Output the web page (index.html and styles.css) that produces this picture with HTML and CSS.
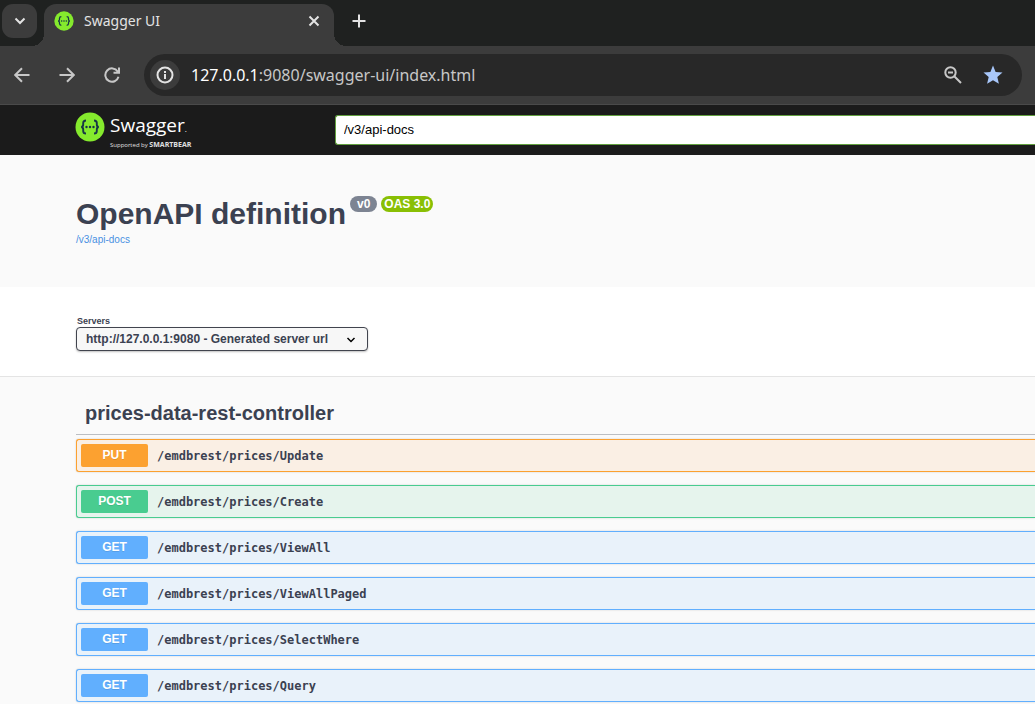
FILE: index.html
```html
<!DOCTYPE html>
<html lang="en">
<head>
<meta charset="utf-8">
<title>Swagger UI</title>
<link rel="stylesheet" href="styles.css">
</head>
<body>
<svg class="sprite" aria-hidden="true">
  <symbol id="swagger-mark" viewBox="0 0 30 30">
    <circle cx="15" cy="15" r="14.5" fill="#85ea2d"/>
    <path d="M11 8.500c-2.300 0-2.800.8-2.800 2.600v1.500c0 1.500-.7 2.300-2 2.400c1.300.1 2 .9 2 2.400v1.500c0 1.800.5 2.600 2.800 2.600M19 8.500c2.300 0 2.800.8 2.800 2.600v1.500c0 1.500.7 2.300 2 2.400c-1.300.1-2 .9-2 2.400v1.500c0 1.800-.5 2.600-2.800 2.600" fill="none" stroke="#173647" stroke-width="1.900"/>
    <g fill="#173647"><circle cx="11.500" cy="15" r="1.200"/><circle cx="15" cy="15" r="1.200"/><circle cx="18.500" cy="15" r="1.200"/></g>
  </symbol>
</svg>

<header class="browser">
  <div class="tab-strip">
    <button class="tab-search" aria-label="Search tabs"><svg width="12" height="12" viewBox="0 0 12 12"><path d="M1.500 3.500 6 8l4.500-4.500"/></svg></button>
    <div class="tab">
      <svg class="tab-icon" width="20" height="20"><use href="#swagger-mark"/></svg>
      <span class="tab-title">Swagger UI</span>
      <button class="icon-button" aria-label="Close tab"><svg width="12" height="12" viewBox="0 0 12 12"><path d="m1.500 1.500 9 9m0-9-9 9"/></svg></button>
    </div>
    <button class="icon-button new-tab" aria-label="New tab"><svg width="14" height="14" viewBox="0 0 14 14"><path d="M7 .5v13M.5 7h13"/></svg></button>
  </div>
  <nav class="toolbar">
    <button class="icon-button" aria-label="Back"><svg width="16" height="16" viewBox="0 0 16 16"><path d="M15.500 8H1.500M8 1.200 1.200 8 8 14.800"/></svg></button>
    <button class="icon-button" aria-label="Forward"><svg width="16" height="16" viewBox="0 0 16 16"><path d="M.5 8h14M8 1.200 14.800 8 8 14.800"/></svg></button>
    <button class="icon-button" aria-label="Reload"><svg width="16" height="16" viewBox="0 0 16 16"><path d="M13.700 4.500A6.700 6.700 0 1 0 14.500 9.800M15 .5v5.300H9.500"/></svg></button>
    <div class="omnibox">
      <button class="site-info" aria-label="View site information"><svg width="18" height="18" viewBox="0 0 18 18"><circle cx="9" cy="9" r="7.500"/><path d="M9 8v5M9 5v2"/></svg></button>
      <span class="address"><b>127.0.0.1</b>:9080/swagger-ui/index.html</span>
      <button class="icon-button" aria-label="Zoom"><svg width="18" height="18" viewBox="0 0 18 18"><circle cx="6.500" cy="6.500" r="5.200"/><path d="M4 6.500h5M10.500 10.500l6.500 6.500"/></svg></button>
      <button class="icon-button" aria-label="Edit bookmark"><svg class="star" width="20" height="20" viewBox="0 0 20 20"><path d="m10 .5 2.600 6.400 6.900.6-5.200 4.500 1.600 6.800L10 15.200l-5.900 3.600L5.700 12 .5 7.500l6.900-.6z"/></svg></button>
    </div>
  </nav>
</header>

<div class="topbar">
  <a class="brand" href="#">
    <svg width="30" height="30"><use href="#swagger-mark"/></svg>
    <span class="brand-text">
      <span class="brand-name">Swagger<small>.</small></span>
      <span class="brand-by">Supported by <b>SMARTBEAR</b></span>
    </span>
  </a>
  <input class="spec-url" type="text" value="/v3/api-docs" aria-label="Definition URL">
</div>

<main>
  <section class="info">
    <h1>OpenAPI definition</h1>
    <div class="badges"><span class="badge">v0</span><span class="badge badge-oas">OAS 3.0</span></div>
    <a class="spec-link" href="#">/v3/api-docs</a>
  </section>

  <section class="servers">
    <label for="servers">Servers</label>
    <div class="select-wrap">
      <select id="servers"><option>http://127.0.0.1:9080 - Generated server url</option></select>
      <svg width="10" height="8" viewBox="0 0 10 8"><path d="m1.500 2 3.500 3.500 3.500-3.500"/></svg>
    </div>
  </section>

  <section class="operations">
    <h2>prices-data-rest-controller</h2>
    <div class="operation-list">
      <button class="operation put"><span class="method">PUT</span><span class="path">/emdbrest/prices/Update</span></button>
      <button class="operation post"><span class="method">POST</span><span class="path">/emdbrest/prices/Create</span></button>
      <button class="operation get"><span class="method">GET</span><span class="path">/emdbrest/prices/ViewAll</span></button>
      <button class="operation get"><span class="method">GET</span><span class="path">/emdbrest/prices/ViewAllPaged</span></button>
      <button class="operation get"><span class="method">GET</span><span class="path">/emdbrest/prices/SelectWhere</span></button>
      <button class="operation get"><span class="method">GET</span><span class="path">/emdbrest/prices/Query</span></button>
    </div>
  </section>
</main>
</body>
</html>
```
FILE: styles.css
```css
* { box-sizing: border-box; }

body {
  margin: 0;
  background: #fafafa;
  color: #3b4151;
  font-family: "Liberation Sans", Arial, sans-serif;
}

button { border: 0; padding: 0; background: none; color: inherit; }
svg { display: block; flex: none; }
.sprite { position: absolute; width: 0; height: 0; }

/* Browser frame */
.browser {
  background: #3c3c3c;
  color: #e3e3e3;
  font-family: "Noto Sans", "Open Sans", sans-serif;
  border-bottom: 1px solid #4a4a4a;
}
.browser svg { fill: none; stroke: currentColor; stroke-width: 2; }
.browser .tab-icon { stroke: none; }

.tab-strip {
  display: flex;
  height: 46px;
  padding: 4px 0 0 2px;
  background: #1f2120;
}
.tab-search {
  display: grid;
  place-items: center;
  width: 35px;
  height: 34px;
  margin-right: 7px;
  border-radius: 11px;
  background: #3c3c3c;
}
.tab {
  position: relative;
  display: flex;
  align-items: center;
  gap: 10px;
  width: 290px;
  padding: 0 14px 8px 10px;
  border-radius: 12px 12px 0 0;
  background: #3c3c3c;
}
.tab::before,
.tab::after {
  content: "";
  position: absolute;
  bottom: 0;
  width: 12px;
  height: 12px;
}
.tab::before { right: 100%; background: radial-gradient(circle at 0 0, transparent 12px, #3c3c3c 12px); }
.tab::after { left: 100%; background: radial-gradient(circle at 100% 0, transparent 12px, #3c3c3c 12px); }
.tab-title { flex: 1; font-size: 14px; line-height: 20px; }
.icon-button { display: grid; place-items: center; }
.new-tab { height: 34px; margin-left: 18px; }

.toolbar {
  display: flex;
  align-items: center;
  gap: 29px;
  height: 58px;
  padding: 0 13px 0 14px;
  color: #c7c7c7;
}
.omnibox {
  display: flex;
  flex: 1;
  align-items: center;
  gap: 21px;
  height: 42px;
  margin-left: -5px;
  padding: 0 19px 0 6px;
  border-radius: 21px;
  background: #282828;
}
.site-info {
  display: grid;
  place-items: center;
  width: 30px;
  height: 30px;
  margin-right: -10px;
  border-radius: 50%;
  background: #3c3c3c;
  color: #e3e3e3;
}
.address { flex: 1; font-size: 16px; line-height: 24px; }
.address b { color: #fff; font-weight: 400; }
.browser .star { fill: #a8c7fa; stroke: none; }

/* Swagger header */
.topbar {
  display: flex;
  align-items: center;
  height: 50px;
  padding-left: 75px;
  background: #1b1b1b;
}
.brand {
  display: flex;
  gap: 5px;
  width: 260px;
  color: #fff;
  font-family: "Open Sans", sans-serif;
  text-decoration: none;
}
.brand-text { display: flex; flex-direction: column; }
.brand-name { font-size: 19px; font-weight: 400; line-height: 27px; }
.brand-name small { font-size: 8px; }
.brand-by { color: #e0e0e0; font-size: 6px; line-height: 6px; }
.brand-by b { font-size: 7px; line-height: 6px; }
.spec-url {
  flex: 1;
  min-width: 0;
  height: 30px;
  padding: 0 8px 2px;
  border: 1px solid #62a03f;
  border-right: 0;
  border-radius: 3px 0 0 3px;
  background: #fff;
  color: #000;
  font: 13px "Liberation Sans", Arial, sans-serif;
}

/* API title */
.info {
  display: grid;
  grid-template-columns: auto 1fr;
  column-gap: 4px;
  padding: 40px 0 40px 76px;
}
h1 { margin: 0; font-size: 30px; line-height: 37px; }
.badges { display: flex; align-items: flex-start; gap: 4px; padding-top: 1px; }
.badge {
  padding: 0 7px;
  border-radius: 8px;
  background: #7d8492;
  color: #fff;
  font-size: 12px;
  font-weight: 700;
  line-height: 16px;
}
.badge-oas { padding: 0 3px; background: #89bf04; }
.spec-link {
  grid-column: 1 / -1;
  color: #4990e2;
  font-size: 10px;
  line-height: 15px;
  text-decoration: none;
}

/* Server picker */
.servers {
  padding: 28px 0 25px 76px;
  border-bottom: 1px solid #e4e4e4;
  background: #fff;
}
.servers label {
  display: block;
  padding-left: 1px;
  font-size: 9px;
  font-weight: 700;
  line-height: 12px;
}
.select-wrap { position: relative; width: 292px; }
.select-wrap select {
  display: block;
  width: 100%;
  height: 24px;
  padding: 0 30px 0 9px;
  appearance: none;
  border: 1px solid #41444e;
  border-radius: 4px;
  background: #f7f7f7;
  box-shadow: 0 1px 2px rgba(0, 0, 0, .25);
  color: #3b4151;
  font: 700 12px "Liberation Sans", Arial, sans-serif;
}
.select-wrap svg {
  position: absolute;
  top: 9px;
  right: 12px;
  fill: none;
  stroke: #000;
  stroke-width: 1.5;
  pointer-events: none;
}

/* Operations */
.operations { padding: 16px 0 3px 76px; }
h2 {
  margin: 0 0 4px;
  padding: 8px 9px 9px;
  border-bottom: 1px solid #bcbec2;
  font-size: 20px;
  line-height: 24px;
}
.operation-list { display: flex; flex-direction: column; gap: 13px; }
.operation {
  display: flex;
  align-items: center;
  gap: 9px;
  height: 33px;
  padding: 0 4px;
  border: 1px solid var(--tone);
  border-right: 0;
  border-radius: 3px 0 0 3px;
  background: var(--tint);
  box-shadow: 0 0 2px rgba(0, 0, 0, .19);
  color: #3b4151;
}
.put { --tone: #fca130; --tint: #faefe4; }
.post { --tone: #49cc90; --tint: #e6f4ed; }
.get { --tone: #61affe; --tint: #e9f2fa; }
.method {
  width: 67px;
  border-radius: 2px;
  background: var(--tone);
  color: #fff;
  font: 700 12px/23px "Liberation Sans", Arial, sans-serif;
  text-align: center;
  text-shadow: 0 1px 0 rgba(0, 0, 0, .1);
}
.path { font: 700 12px/16px "DejaVu Sans Mono", monospace; }
```
